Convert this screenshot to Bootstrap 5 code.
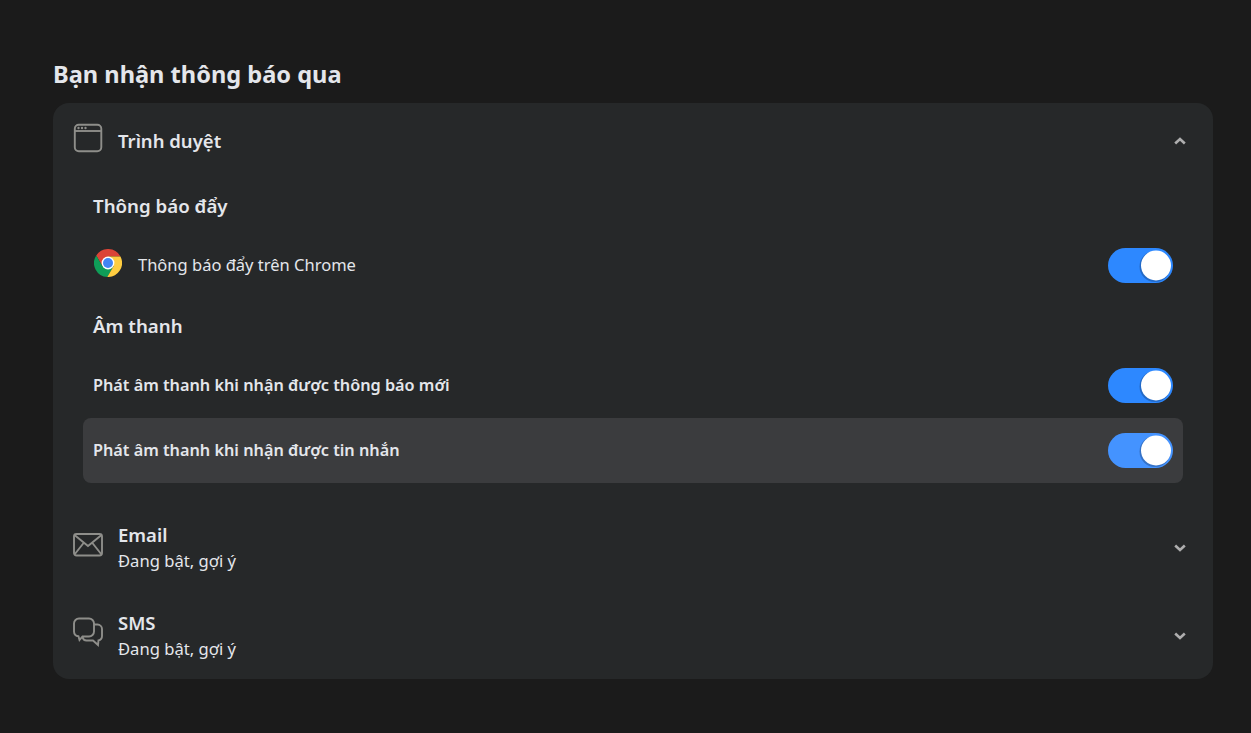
<!DOCTYPE html>
<html lang="vi">
<head>
  <meta charset="UTF-8">
  <title>Cài đặt thông báo</title>
  <link href="https://cdn.jsdelivr.net/npm/bootstrap@5.3.0/dist/css/bootstrap.min.css" rel="stylesheet">
  <style>
    body { background: #1b1b1b; color: #e4e6eb; font-family: "Noto Sans", "Open Sans", sans-serif; }
    .notif-wrap { padding: 57px 38px 0 53px; }
    .notif-title { font-size: 23.600px; font-weight: 700; line-height: 34px; margin: 0 0 12px; }
    .notif-panel { background: #262829; border-radius: 16px; height: 576px; }
    .channel-head { background: none; border: 0; color: #e4e6eb; text-align: left; padding: 0 26px 0 20px; width: 100%; height: 76px; }
    .channel-sub { height: 88px; }
    .channel-icon { width: 30px; height: 30px; flex: none; color: #8e8e8a; margin: -6px 15px 0 0; }
    .channel-sub .channel-icon { margin-top: -8px; }
    .channel-name { font-size: 18.500px; font-weight: 600; line-height: 25px; margin-top: -2px; }
    .channel-state { font-size: 16.600px; line-height: 25px; padding-top: 1px; }
    .chevron { width: 14px; height: 14px; color: #aeaeae; flex: none; margin-top: -1px; }
    .channel-head[aria-expanded="false"] .chevron { transform: rotate(180deg); margin-top: 0; }
    .channel-body { padding: 0 30px; height: 325px; }
    .group-title { font-size: 18.700px; font-weight: 600; line-height: 26px; margin: 0 10px; padding-top: 14px; height: 56px; }
    .group-title.second { padding-top: 18px; height: 58px; }
    .setting-row { padding: 0 10px; height: 65px; border-radius: 8px; font-size: 16.500px; }
    .setting-row.first { height: 60px; }
    .setting-row.first span { padding-top: 1px; }
    .setting-row.strong { font-weight: 600; font-size: 16.250px; }
    .setting-row.hovered { background: #3b3c3e; }
    .chrome-logo { width: 28px; height: 28px; margin: -4px 16px 0 1px; flex: none; }
    .notif-switch.form-check-input { width: 65px; height: 35px; margin: 0; border: 0; flex: none; background-color: #2d88ff; border-radius: 18px;
      background-size: 65px 35px; background-position: 0 0;
      background-image: url("data:image/svg+xml,%3csvg xmlns='http://www.w3.org/2000/svg' viewBox='0 0 65 35'%3e%3ccircle cx='47' cy='18.5' r='15.5' fill='%23000' fill-opacity='.22'/%3e%3ccircle cx='48' cy='17.5' r='15' fill='%23fff'/%3e%3c/svg%3e"); }
    .notif-switch.form-check-input:focus { box-shadow: none; }
    .hovered .notif-switch.form-check-input { background-color: #4493ff; }
  </style>
</head>
<body>
  <div class="notif-wrap">
    <h2 class="notif-title">Bạn nhận thông báo qua</h2>
    <div class="notif-panel">

      <button class="channel-head d-flex align-items-center" type="button" data-bs-toggle="collapse" data-bs-target="#browserBody" aria-expanded="true">
        <svg class="channel-icon" viewBox="0 0 30 30" fill="none" stroke="currentColor" stroke-width="1.900">
          <rect x="1.800" y="1.800" width="26.500" height="26.500" rx="4"/>
          <path d="M2 8h26"/>
          <g fill="currentColor" stroke="none"><circle cx="5.500" cy="5" r="1.200"/><circle cx="9" cy="5" r="1.200"/><circle cx="12.500" cy="5" r="1.200"/></g>
        </svg>
        <span class="channel-name flex-grow-1">Trình duyệt</span>
        <svg class="chevron" viewBox="0 0 14 14" fill="none" stroke="currentColor" stroke-width="2.600"><path d="M2.200 9.500L7 5l4.800 4.500"/></svg>
      </button>

      <div class="collapse show" id="browserBody">
        <div class="channel-body">
          <div class="group-title">Thông báo đẩy</div>
          <div class="setting-row first d-flex align-items-center">
            <svg class="chrome-logo" viewBox="0 0 28 28">
              <path fill="#db4437" d="M14 7.600H26.450A14 14 0 0 0 2.230 6.420L8.460 17.200z"/>
              <path fill="#0f9d58" transform="rotate(-120 14 14)" d="M14 7.600H26.450A14 14 0 0 0 2.230 6.420L8.460 17.200z"/>
              <path fill="#ffcd40" transform="rotate(120 14 14)" d="M14 7.600H26.450A14 14 0 0 0 2.230 6.420L8.460 17.200z"/>
              <circle cx="14" cy="14" r="6.400" fill="#fff"/>
              <circle cx="14" cy="14" r="5" fill="#4285f4"/>
            </svg>
            <span class="flex-grow-1">Thông báo đẩy trên Chrome</span>
            <input class="form-check-input notif-switch" type="checkbox" role="switch" checked aria-label="Thông báo đẩy trên Chrome">
          </div>
          <div class="group-title second">Âm thanh</div>
          <div class="setting-row strong d-flex align-items-center">
            <span class="flex-grow-1">Phát âm thanh khi nhận được thông báo mới</span>
            <input class="form-check-input notif-switch" type="checkbox" role="switch" checked aria-label="Thông báo mới">
          </div>
          <div class="setting-row strong hovered d-flex align-items-center">
            <span class="flex-grow-1">Phát âm thanh khi nhận được tin nhắn</span>
            <input class="form-check-input notif-switch" type="checkbox" role="switch" checked aria-label="Tin nhắn">
          </div>
        </div>
      </div>

      <button class="channel-head channel-sub d-flex align-items-center" type="button" aria-expanded="false">
        <svg class="channel-icon" viewBox="0 0 30 30" fill="none" stroke="currentColor" stroke-width="1.900">
          <rect x="1" y="5" width="28" height="21.500" rx="2.500"/>
          <path d="M1.500 6l13.500 11L28.500 6M1.500 25.500l9.500-12M28.500 25.500L19 13.500"/>
        </svg>
        <span class="flex-grow-1">
          <span class="channel-name d-block">Email</span>
          <span class="channel-state d-block">Đang bật, gợi ý</span>
        </span>
        <svg class="chevron" viewBox="0 0 14 14" fill="none" stroke="currentColor" stroke-width="2.600"><path d="M2.200 9.500L7 5l4.800 4.500"/></svg>
      </button>

      <button class="channel-head channel-sub d-flex align-items-center" type="button" aria-expanded="false">
        <svg class="channel-icon" viewBox="0 0 30 30" fill="none" stroke="currentColor" stroke-width="1.900">
          <path d="M6 1.500h10a5 5 0 0 1 5 5v8a5 5 0 0 1-5 5H9.500L6.500 23l-1-3.700A5 5 0 0 1 1 14.500v-8a5 5 0 0 1 5-5z"/>
          <path d="M21 7.500h3.500a4.500 4.500 0 0 1 4.500 4.500v7a4.500 4.500 0 0 1-3.500 4.400L25 28l-5-4.500h-6.500c-2 0-3.500-1.200-4-3.500"/>
        </svg>
        <span class="flex-grow-1">
          <span class="channel-name d-block">SMS</span>
          <span class="channel-state d-block">Đang bật, gợi ý</span>
        </span>
        <svg class="chevron" viewBox="0 0 14 14" fill="none" stroke="currentColor" stroke-width="2.600"><path d="M2.200 9.500L7 5l4.800 4.500"/></svg>
      </button>

    </div>
  </div>
  <script src="https://cdn.jsdelivr.net/npm/bootstrap@5.3.0/dist/js/bootstrap.bundle.min.js"></script>
</body>
</html>
